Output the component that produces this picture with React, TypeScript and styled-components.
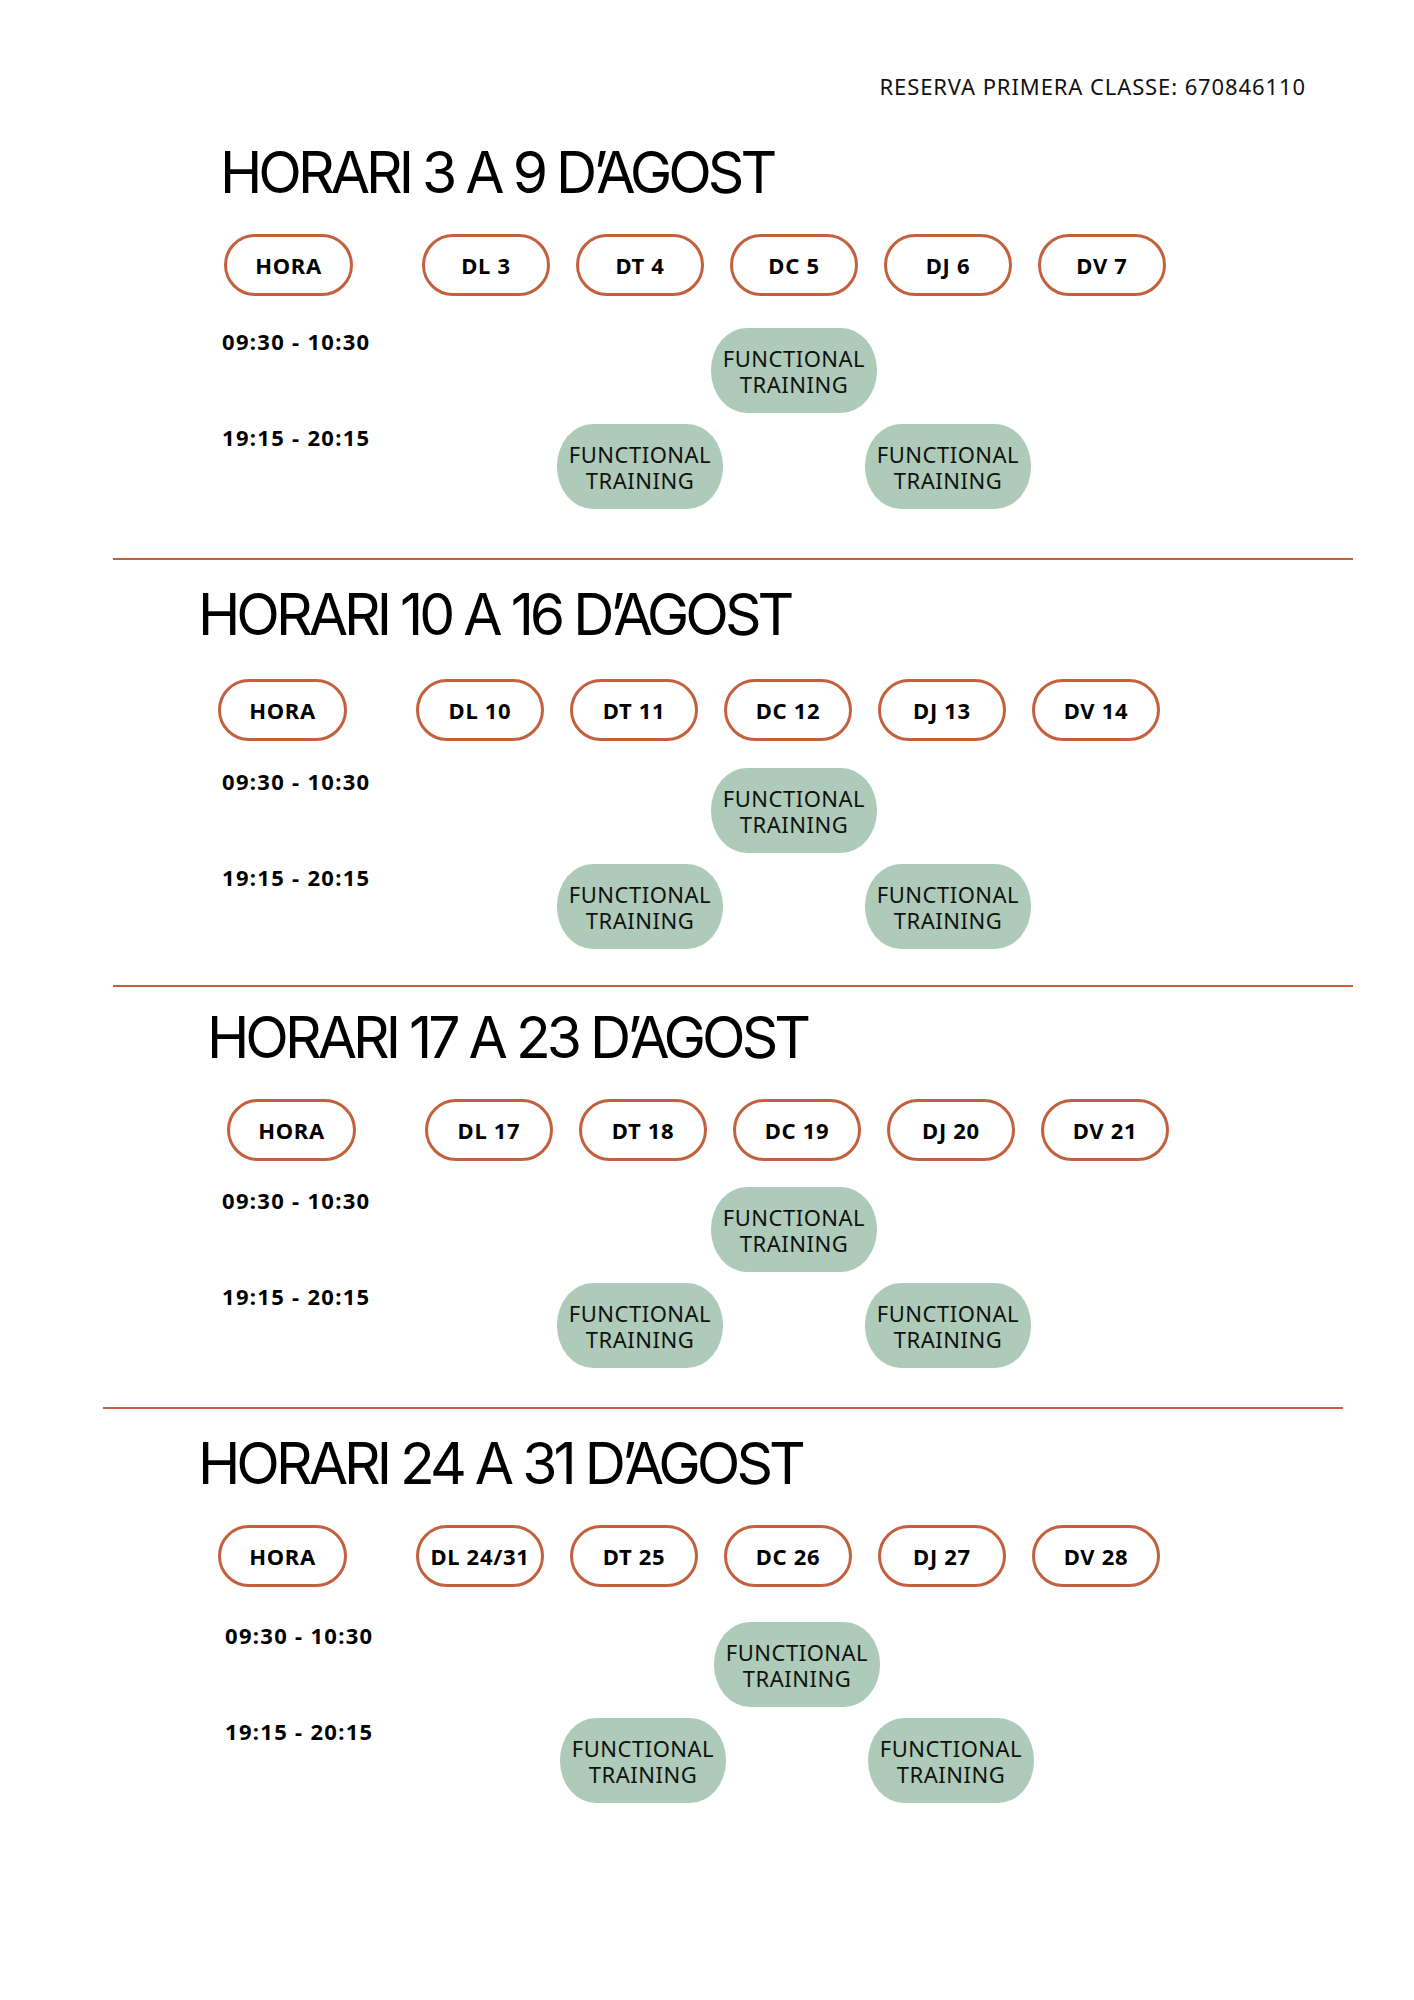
import React from 'react';
import styled, { createGlobalStyle } from 'styled-components';

type Week = {
  title: string;
  days: string[];
  titleX: number;
  pillX: number;
  gridX: number;
  titleTop: number;
  pillsTop: number;
  bodyTop: number;
};

const weeks: Week[] = [
  {
    title: 'HORARI 3 A 9 D’AGOST',
    days: ['DL 3', 'DT 4', 'DC 5', 'DJ 6', 'DV 7'],
    titleX: 220,
    pillX: 224,
    gridX: 222,
    titleTop: 45,
    pillsTop: 33,
    bodyTop: 32,
  },
  {
    title: 'HORARI 10 A 16 D’AGOST',
    days: ['DL 10', 'DT 11', 'DC 12', 'DJ 13', 'DV 14'],
    titleX: 198,
    pillX: 218,
    gridX: 222,
    titleTop: 26,
    pillsTop: 36,
    bodyTop: 27,
  },
  {
    title: 'HORARI 17 A 23 D’AGOST',
    days: ['DL 17', 'DT 18', 'DC 19', 'DJ 20', 'DV 21'],
    titleX: 207,
    pillX: 227,
    gridX: 222,
    titleTop: 22,
    pillsTop: 33,
    bodyTop: 26,
  },
  {
    title: 'HORARI 24 A 31 D’AGOST',
    days: ['DL 24/31', 'DT 25', 'DC 26', 'DJ 27', 'DV 28'],
    titleX: 198,
    pillX: 218,
    gridX: 225,
    titleTop: 26,
    pillsTop: 33,
    bodyTop: 35,
  },
];

// divider left edge + space above it
const dividers = [
  { x: 113, top: 49 },
  { x: 113, top: 36 },
  { x: 103, top: 39 },
];

const GlobalStyle = createGlobalStyle`
  html, body {
    margin: 0;
    padding: 0;
    background: #ffffff;
  }
  body {
    font-family: 'Noto Sans', 'Open Sans', sans-serif;
    color: #000000;
  }
`;

export default function App() {
  return (
    <>
      <GlobalStyle />
      <StyledPage>
        <StyledBooking>RESERVA PRIMERA CLASSE: 670846110</StyledBooking>
        {weeks.map((week, i) => (
          <React.Fragment key={week.title}>
            <WeekSection week={week} />
            {dividers[i] && (
              <StyledDivider $x={dividers[i].x} $top={dividers[i].top} />
            )}
          </React.Fragment>
        ))}
      </StyledPage>
    </>
  );
}

function WeekSection({ week }: { week: Week }) {
  return (
    <section>
      <StyledTitle $x={week.titleX} $top={week.titleTop}>
        {week.title}
      </StyledTitle>
      <StyledPillRow $x={week.pillX} $top={week.pillsTop}>
        <StyledPill className="hora">HORA</StyledPill>
        {week.days.map((day) => (
          <StyledPill key={day}>{day}</StyledPill>
        ))}
      </StyledPillRow>
      <StyledBody $x={week.gridX} $top={week.bodyTop}>
        <StyledTime $row={1}>09:30 - 10:30</StyledTime>
        <StyledCell $row={1} $col={4}>
          <StyledClass>FUNCTIONAL TRAINING</StyledClass>
        </StyledCell>
        <StyledTime $row={2}>19:15 - 20:15</StyledTime>
        <StyledCell $row={2} $col={3}>
          <StyledClass>FUNCTIONAL TRAINING</StyledClass>
        </StyledCell>
        <StyledCell $row={2} $col={5}>
          <StyledClass>FUNCTIONAL TRAINING</StyledClass>
        </StyledCell>
      </StyledBody>
    </section>
  );
}

const StyledPage = styled.div`
  width: 1414px;
  min-height: 2000px;
  padding-top: 73px;
  box-sizing: border-box;
`;

const StyledBooking = styled.div`
  padding-right: 108px;
  text-align: right;
  font-family: 'Noto Sans', sans-serif;
  font-size: 22px;
  line-height: 26px;
  letter-spacing: 0.9px;
  color: #111111;
`;

const StyledTitle = styled.h1<{ $x: number; $top: number }>`
  margin: ${(p) => p.$top}px 0 0 ${(p) => p.$x}px;
  font-family: Inter, 'Liberation Sans', sans-serif;
  font-weight: 400;
  font-size: 57px;
  line-height: 57px;
  letter-spacing: -0.07em;
  color: #000000;
  white-space: nowrap;
`;

const StyledPillRow = styled.div<{ $x: number; $top: number }>`
  display: flex;
  gap: 26px;
  margin: ${(p) => p.$top}px 0 0 ${(p) => p.$x}px;

  .hora {
    width: 129px;
    margin-right: 43px;
  }
`;

const StyledPill = styled.div`
  width: 128px;
  height: 62px;
  box-sizing: border-box;
  border: 3px solid #c3603d;
  border-radius: 31px;
  display: flex;
  align-items: center;
  justify-content: center;
  font-family: 'Noto Sans', sans-serif;
  font-weight: 700;
  font-size: 22px;
  letter-spacing: 0.7px;
  color: #000000;
  white-space: nowrap;
`;

const StyledBody = styled.div<{ $x: number; $top: number }>`
  display: grid;
  grid-template-columns: 187px repeat(5, 154px);
  row-gap: 11px;
  margin: ${(p) => p.$top}px 0 0 ${(p) => p.$x}px;
`;

const StyledTime = styled.div<{ $row: number }>`
  grid-column: 1;
  grid-row: ${(p) => p.$row};
  padding-top: 1px;
  font-family: 'Noto Sans', sans-serif;
  font-weight: 700;
  font-size: 22px;
  line-height: 24px;
  letter-spacing: 1.3px;
  white-space: nowrap;
`;

const StyledCell = styled.div<{ $row: number; $col: number }>`
  grid-column: ${(p) => p.$col};
  grid-row: ${(p) => p.$row};
  display: flex;
  justify-content: center;
`;

const StyledClass = styled.div`
  flex-shrink: 0;
  width: 166px;
  height: 85px;
  border-radius: 36px / 42px;
  background: #adcbb8;
  display: flex;
  align-items: center;
  justify-content: center;
  text-align: center;
  padding: 0 6px;
  box-sizing: border-box;
  font-family: 'Noto Sans', sans-serif;
  font-size: 22px;
  line-height: 26px;
  letter-spacing: 0.5px;
  color: #111111;
`;

const StyledDivider = styled.hr<{ $x: number; $top: number }>`
  width: 1240px;
  height: 2px;
  margin: ${(p) => p.$top}px 0 0 ${(p) => p.$x}px;
  border: none;
  background: #c3603d;
`;
